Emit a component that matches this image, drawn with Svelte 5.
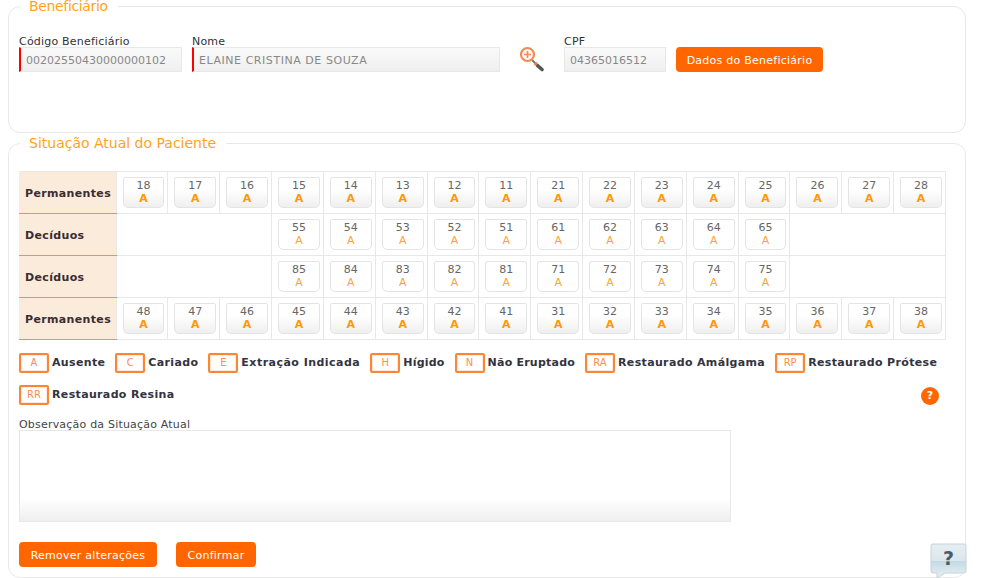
<script>
  const up = [18,17,16,15,14,13,12,11,21,22,23,24,25,26,27,28];
  const low = [48,47,46,45,44,43,42,41,31,32,33,34,35,36,37,38];
  const decUp = [55,54,53,52,51,61,62,63,64,65];
  const decLow = [85,84,83,82,81,71,72,73,74,75];
  const codes = [
    ['A','Ausente'],['C','Cariado'],['E','Extração Indicada'],['H','Hígido'],
    ['N','Não Eruptado'],['RA','Restaurado Amálgama'],['RP','Restaurado Prótese'],['RR','Restaurado Resina']
  ];
  const cols = Array(16).fill(0);
</script>

<div class="page">
  <fieldset class="box first">
    <legend>Beneficiário</legend>
    <div class="form-row">
      <label class="field code"><span>Código Beneficiário</span><input class="req" readonly value="00202550430000000102" /></label>
      <label class="field name"><span>Nome</span><input class="req caps" readonly value="ELAINE CRISTINA DE SOUZA" /></label>
      <svg class="lens" width="26" height="26" viewBox="0 0 26 26" aria-hidden="true">
        <line x1="13" y1="14" x2="17" y2="18" stroke="#777" stroke-width="2"/>
        <line x1="16" y1="17" x2="19" y2="20" stroke="#f08040" stroke-width="3.4"/>
        <line x1="19" y1="20" x2="23" y2="23.5" stroke="#555" stroke-width="3.6" stroke-linecap="round"/>
        <circle cx="8.5" cy="8.5" r="6.5" fill="#fff8f2" stroke="#f28a55" stroke-width="2.2"/>
        <path d="M8.5 5v7M5 8.5h7" stroke="#f28a55" stroke-width="1.6"/>
      </svg>
      <label class="field cpf"><span>CPF</span><input readonly value="04365016512" /></label>
      <button class="btn dados">Dados do Beneficiário</button>
    </div>
  </fieldset>

  <fieldset class="box second">
    <legend>Situação Atual do Paciente</legend>
    <table>
      <colgroup><col class="head" />{#each cols as _}<col />{/each}</colgroup>
      <tbody>
        <tr>
          <th>Permanentes</th>
          {#each up as n}<td><div class="tooth perm"><span>{n}</span><b>A</b></div></td>{/each}
        </tr>
        <tr>
          <th>Decíduos</th>
          <td colspan="3"></td>
          {#each decUp as n}<td><div class="tooth"><span>{n}</span><i>A</i></div></td>{/each}
          <td colspan="3"></td>
        </tr>
        <tr>
          <th>Decíduos</th>
          <td colspan="3"></td>
          {#each decLow as n}<td><div class="tooth"><span>{n}</span><i>A</i></div></td>{/each}
          <td colspan="3"></td>
        </tr>
        <tr>
          <th>Permanentes</th>
          {#each low as n}<td><div class="tooth perm"><span>{n}</span><b>A</b></div></td>{/each}
        </tr>
      </tbody>
    </table>

    <div class="codes">
      {#each codes as [c, t]}
        <div class="code-item"><span class="swatch">{c}</span><strong class:wide={c === 'E'} class:tight={c === 'H' || c === 'N'}>{t}</strong></div>
      {/each}
      <span class="help">?</span>
    </div>

    <label class="obs">
      <span>Observação da Situação Atual</span>
      <textarea></textarea>
    </label>

    <div class="actions">
      <button class="btn remove">Remover alterações</button>
      <button class="btn confirm">Confirmar</button>
    </div>
  </fieldset>

  <div class="bubble">
    <svg width="37" height="35" viewBox="0 0 37 35" aria-hidden="true">
      <defs>
        <linearGradient id="bub" x1="0" y1="0" x2="0" y2="1">
          <stop offset="0" stop-color="#e6eef2"/>
          <stop offset="0.5" stop-color="#dbe7ed"/>
          <stop offset="0.51" stop-color="#c4dae4"/>
          <stop offset="1" stop-color="#e8f1f5"/>
        </linearGradient>
      </defs>
      <path d="M3 1h31a2 2 0 0 1 2 2v25a2 2 0 0 1-2 2H15l-8 5v-5H3a2 2 0 0 1-2-2V3a2 2 0 0 1 2-2z" fill="url(#bub)" stroke="#c4d3da"/>
    </svg>
    <span>?</span>
  </div>
</div>

<style>
  :global(body) { margin: 0; background: #fff; }
  .page {
    position: relative;
    height: 578px;
    overflow: hidden;
    padding: 0 15px 0 8px;
    font-family: "DejaVu Sans", Verdana, sans-serif;
    font-size: 11px;
    color: #333;
  }
  .box {
    margin: 0;
    padding: 0 10px;
    border: 1px solid #e8e8e8;
    border-radius: 12px;
    min-width: 0;
  }
  .first { margin-top: -2px; padding-bottom: 60px; }
  .first legend { letter-spacing: -0.35px; }
  .second { margin-top: 2px; padding-top: 20px; padding-bottom: 10px; }
  legend {
    margin-left: 1px;
    padding: 0 10px 0 9px;
    font-size: 14px;
    line-height: 16px;
    color: #ffa31a;
  }
  .form-row { display: flex; align-items: flex-end; padding-top: 20px; }
  .field { display: flex; flex-direction: column; }
  .field span { line-height: 15px; height: 13px; color: #333; letter-spacing: 0.2px; }
  input {
    box-sizing: border-box;
    height: 25px;
    width: 100%;
    padding: 1px 5px 0;
    border: 1px solid #e8e8e8;
    background: linear-gradient(#fafafa, #efefef);
    font: 11px "DejaVu Sans", Verdana, sans-serif;
    color: #888;
    outline: none;
  }
  input.req { border-left: 2px solid #f00; }
  input.caps { letter-spacing: 0.55px; }
  .code { width: 163px; margin-right: 10px; }
  .name { width: 308px; margin-right: 19px; }
  .lens { margin-right: 19px; flex: none; }
  .cpf { width: 102px; margin-right: 10px; }
  .btn {
    height: 25px;
    padding: 1px 0 0;
    border: 0;
    border-radius: 4px;
    background: #f60;
    color: #fff;
    font: 11px "DejaVu Sans", Verdana, sans-serif;
    letter-spacing: 0.25px;
  }
  .dados { width: 147px; }
  table {
    width: 927px;
    table-layout: fixed;
    border-collapse: collapse;
  }
  col.head { width: 97px; }
  tr { height: 42px; }
  th {
    padding: 2px 0 0 6px;
    background: #faebdb;
    border-bottom: 1px solid #ff8c4d;
    border-top: 1px solid #ff8c4d;
    text-align: left;
    font-size: 11px;
    font-weight: bold;
    letter-spacing: 0.35px;
    color: #3a2c33;
  }
  tr:first-child th { border-top: 1px solid #e8e8e8; }
  td { padding: 0; border: 1px solid #e8e8e8; }
  .tooth {
    box-sizing: border-box;
    height: 31px;
    margin: 0 3px 0 6px;
    padding-top: 1px;
    border: 1px solid #e4e4e4;
    border-radius: 2px 2px 5px 5px;
    background: #fff;
    text-align: center;
    line-height: 13px;
  }
  .tooth.perm { background: linear-gradient(#fff 40%, #efefef); }
  .tooth span, .tooth b, .tooth i { display: block; }
  .tooth span { color: #666; font-size: 11px; }
  .tooth b { color: #f90; font-size: 11px; }
  .tooth i { color: #f9a72c; font-size: 11px; font-style: normal; }
  .codes {
    display: flex;
    flex-wrap: wrap;
    align-items: center;
    gap: 12px 10px;
    margin-top: 13px;
  }
  .code-item { display: flex; align-items: center; }
  .swatch {
    box-sizing: border-box;
    width: 30px;
    height: 20px;
    margin-right: 3px;
    border: 2px solid #ff8533;
    box-shadow: inset 0 0 0 1px #ffe9dc;
    border-radius: 2px;
    text-align: center;
    font-size: 10px;
    line-height: 16px;
    color: #ff8c4d;
  }
  .code-item strong { margin-bottom: 2px; font-size: 11px; letter-spacing: 0.35px; color: #333340; }
  .code-item strong.wide { letter-spacing: 0.47px; }
  .code-item strong.tight { letter-spacing: 0.22px; }
  .help {
    width: 18px;
    height: 18px;
    margin: 1px 16px 0 auto;
    border-radius: 50%;
    background: #f60;
    color: #fff;
    text-align: center;
    font-size: 11px;
    font-weight: bold;
    line-height: 18px;
  }
  .obs { display: block; margin-top: 12px; }
  .obs span { display: block; line-height: 15px; height: 13px; color: #444; letter-spacing: 0.2px; }
  textarea {
    display: block;
    box-sizing: border-box;
    width: 712px;
    height: 92px;
    margin: 0;
    padding: 4px;
    border: 1px solid #e8e8e8;
    background: linear-gradient(#fff 75%, #efefef);
    resize: none;
    outline: none;
  }
  .actions { display: flex; gap: 19px; margin-top: 20px; }
  .remove { width: 138px; }
  .confirm { width: 80px; }
  .bubble {
    position: absolute;
    left: 930px;
    top: 543px;
    width: 37px;
    height: 35px;
  }
  .bubble svg { display: block; }
  .bubble span {
    position: absolute;
    left: 0;
    top: 2px;
    width: 37px;
    text-align: center;
    font: bold 19px/26px "DejaVu Sans", sans-serif;
    color: #4a5c68;
  }
</style>
